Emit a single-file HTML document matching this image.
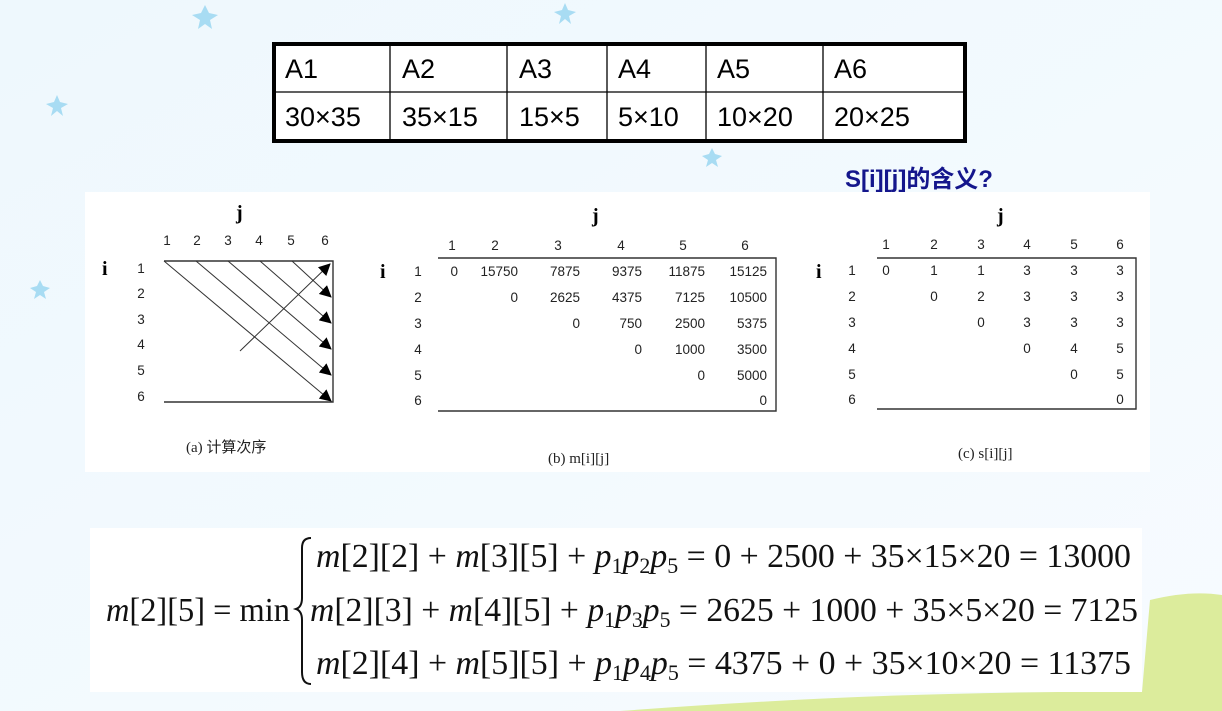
<!DOCTYPE html>
<html><head><meta charset="utf-8"><style>
html,body{margin:0;padding:0;width:1222px;height:711px;overflow:hidden;background:#f4faff}
svg{display:block}
</style></head><body>
<svg width="1222" height="711" xmlns="http://www.w3.org/2000/svg">
<defs>
<linearGradient id="bg" x1="0" y1="0" x2="1" y2="1"><stop offset="0" stop-color="#eef8fd"/><stop offset="1" stop-color="#f7fbff"/></linearGradient>
<marker id="ar" markerWidth="12" markerHeight="12" refX="11" refY="6" orient="auto" markerUnits="userSpaceOnUse"><path d="M0,0 L12,6 L0,12 Z" fill="#000"/></marker>
</defs>
<rect width="1222" height="711" fill="url(#bg)"/>
<g fill="#a8dcf3">
<path d="M205,5 l4,8 9,2 -8,5 2,9 -7,-5 -7,5 2,-9 -8,-5 9,-2z"/>
<path d="M57,95 l3,7 8,2 -7,4 2,8 -6,-5 -6,5 2,-8 -7,-4 8,-2z"/>
<path d="M565,3 l3,7 8,2 -7,4 2,8 -6,-5 -6,5 2,-8 -7,-4 8,-2z"/>
<path d="M712,148 l3,6 7,2 -6,4 2,7 -6,-4 -6,4 2,-7 -6,-4 7,-2z"/>
<path d="M40,280 l3,6 7,2 -6,4 2,7 -6,-4 -6,4 2,-7 -6,-4 7,-2z"/>
</g>
<path d="M1150,600 Q1190,590 1222,595 L1222,711 L620,711 Q900,690 1142,692 Z" fill="#dcec9c"/>
<!-- top table -->
<rect x="274" y="44" width="691" height="97" fill="#fff" stroke="#000" stroke-width="4"/>
<g stroke="#000" stroke-width="1.3">
<line x1="274" y1="92" x2="965" y2="92"/>
<line x1="390" y1="44" x2="390" y2="141"/><line x1="507" y1="44" x2="507" y2="141"/>
<line x1="607" y1="44" x2="607" y2="141"/><line x1="706" y1="44" x2="706" y2="141"/>
<line x1="823" y1="44" x2="823" y2="141"/>
</g>
<g font-family="Liberation Sans, sans-serif" font-size="27" fill="#000">
<text x="285" y="78">A1</text><text x="402" y="78">A2</text><text x="519" y="78">A3</text><text x="618" y="78">A4</text><text x="717" y="78">A5</text><text x="834" y="78">A6</text>
<text x="285" y="126">30×35</text><text x="402" y="126">35×15</text><text x="519" y="126">15×5</text><text x="618" y="126">5×10</text><text x="717" y="126">10×20</text><text x="834" y="126">20×25</text>
</g>
<text x="845" y="187" font-family="Liberation Sans, 'Noto Sans CJK SC', sans-serif" font-size="24" font-weight="bold" fill="#14168c">S[i][j]的含义?</text>
<!-- figure panel -->
<rect x="85" y="192" width="1065" height="280" fill="#fff"/>
<g font-family="Liberation Serif, 'Noto Sans CJK SC', serif" fill="#000">
<text x="236" y="219" font-size="20" font-weight="bold">j</text>
<text x="102" y="275" font-size="20" font-weight="bold">i</text>
<text x="592" y="222" font-size="20" font-weight="bold">j</text>
<text x="380" y="278" font-size="20" font-weight="bold">i</text>
<text x="997" y="222" font-size="20" font-weight="bold">j</text>
<text x="816" y="278" font-size="20" font-weight="bold">i</text>
</g>
<g font-family="Liberation Sans, sans-serif" font-size="13.5" fill="#222" text-anchor="middle">
<text x="167" y="245">1</text><text x="197" y="245">2</text><text x="228" y="245">3</text><text x="259" y="245">4</text><text x="291" y="245">5</text><text x="325" y="245">6</text>
<text x="141" y="273">1</text><text x="141" y="298">2</text><text x="141" y="324">3</text><text x="141" y="349">4</text><text x="141" y="375">5</text><text x="141" y="401">6</text>
<text x="452" y="250">1</text><text x="495" y="250">2</text><text x="558" y="250">3</text><text x="621" y="250">4</text><text x="683" y="250">5</text><text x="745" y="250">6</text>
<text x="418" y="276">1</text><text x="418" y="302">2</text><text x="418" y="328">3</text><text x="418" y="354">4</text><text x="418" y="380">5</text><text x="418" y="405">6</text>
<text x="886" y="249">1</text><text x="934" y="249">2</text><text x="981" y="249">3</text><text x="1027" y="249">4</text><text x="1074" y="249">5</text><text x="1120" y="249">6</text>
<text x="852" y="275">1</text><text x="852" y="301">2</text><text x="852" y="327">3</text><text x="852" y="353">4</text><text x="852" y="379">5</text><text x="852" y="404">6</text>
<text x="886" y="275">0</text><text x="934" y="275">1</text><text x="981" y="275">1</text><text x="1027" y="275">3</text><text x="1074" y="275">3</text><text x="1120" y="275">3</text>
<text x="934" y="301">0</text><text x="981" y="301">2</text><text x="1027" y="301">3</text><text x="1074" y="301">3</text><text x="1120" y="301">3</text>
<text x="981" y="327">0</text><text x="1027" y="327">3</text><text x="1074" y="327">3</text><text x="1120" y="327">3</text>
<text x="1027" y="353">0</text><text x="1074" y="353">4</text><text x="1120" y="353">5</text>
<text x="1074" y="379">0</text><text x="1120" y="379">5</text>
<text x="1120" y="404">0</text>
</g>
<g font-family="Liberation Sans, sans-serif" font-size="13.5" fill="#222" text-anchor="end">
<text x="458" y="276">0</text><text x="518" y="276">15750</text><text x="580" y="276">7875</text><text x="642" y="276">9375</text><text x="705" y="276">11875</text><text x="767" y="276">15125</text>
<text x="518" y="302">0</text><text x="580" y="302">2625</text><text x="642" y="302">4375</text><text x="705" y="302">7125</text><text x="767" y="302">10500</text>
<text x="580" y="328">0</text><text x="642" y="328">750</text><text x="705" y="328">2500</text><text x="767" y="328">5375</text>
<text x="642" y="354">0</text><text x="705" y="354">1000</text><text x="767" y="354">3500</text>
<text x="705" y="380">0</text><text x="767" y="380">5000</text>
<text x="767" y="405">0</text>
</g>
<g stroke="#333" stroke-width="1.4" fill="none">
<polyline points="164,261 333,261 333,402 164,402"/>
<polyline points="438,258 776,258 776,411 438,411"/>
<polyline points="877,258 1136,258 1136,409 877,409"/>
</g>
<g stroke="#333" stroke-width="1" marker-end="url(#ar)">
<line x1="164" y1="261" x2="331" y2="401"/>
<line x1="196" y1="261" x2="331" y2="375"/>
<line x1="228" y1="261" x2="331" y2="349"/>
<line x1="260" y1="261" x2="331" y2="323"/>
<line x1="292" y1="261" x2="331" y2="297"/>
<line x1="240" y1="351" x2="330" y2="264"/>
</g>
<g font-family="Liberation Serif, 'Noto Sans CJK SC', serif" font-size="15" fill="#222">
<text x="186" y="452">(a)  计算次序</text>
<text x="548" y="463">(b)    m[i][j]</text>
<text x="958" y="458">(c)    s[i][j]</text>
</g>
<!-- formula -->
<rect x="90" y="528" width="1052" height="164" fill="#fff"/>
<g font-family="Liberation Serif, serif" font-size="34" fill="#111">
<text x="106" y="621" textLength="184" lengthAdjust="spacingAndGlyphs"><tspan font-style="italic">m</tspan>[2][5] = min</text>
<text x="316" y="567" textLength="815" lengthAdjust="spacingAndGlyphs"><tspan font-style="italic">m</tspan>[2][2] + <tspan font-style="italic">m</tspan>[3][5] + <tspan font-style="italic">p</tspan><tspan font-size="22" dy="6">1</tspan><tspan font-style="italic" dy="-6">p</tspan><tspan font-size="22" dy="6">2</tspan><tspan font-style="italic" dy="-6">p</tspan><tspan font-size="22" dy="6">5</tspan><tspan dy="-6"> = 0 + 2500 + 35×15×20 = 13000</tspan></text>
<text x="310" y="621" textLength="828" lengthAdjust="spacingAndGlyphs"><tspan font-style="italic">m</tspan>[2][3] + <tspan font-style="italic">m</tspan>[4][5] + <tspan font-style="italic">p</tspan><tspan font-size="22" dy="6">1</tspan><tspan font-style="italic" dy="-6">p</tspan><tspan font-size="22" dy="6">3</tspan><tspan font-style="italic" dy="-6">p</tspan><tspan font-size="22" dy="6">5</tspan><tspan dy="-6"> = 2625 + 1000 + 35×5×20 = 7125</tspan></text>
<text x="316" y="674" textLength="815" lengthAdjust="spacingAndGlyphs"><tspan font-style="italic">m</tspan>[2][4] + <tspan font-style="italic">m</tspan>[5][5] + <tspan font-style="italic">p</tspan><tspan font-size="22" dy="6">1</tspan><tspan font-style="italic" dy="-6">p</tspan><tspan font-size="22" dy="6">4</tspan><tspan font-style="italic" dy="-6">p</tspan><tspan font-size="22" dy="6">5</tspan><tspan dy="-6"> = 4375 + 0 + 35×10×20 = 11375</tspan></text>
</g>
<path d="M311,538 Q302,538 302,548 L302,598 Q302,607 296,609 Q302,611 302,620 L302,672 Q302,684 311,684" stroke="#111" stroke-width="2" fill="none"/>
</svg>
</body></html>
